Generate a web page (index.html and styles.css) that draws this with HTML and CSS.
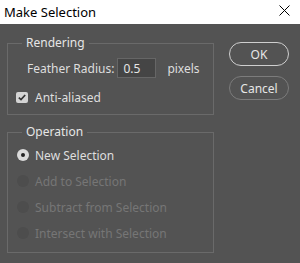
FILE: index.html
```html
<!DOCTYPE html>
<html lang="en">
<head>
    <meta charset="UTF-8">
    <meta name="viewport" content="width=device-width, initial-scale=1.0">
    <title>Make Selection</title>
    <link rel="stylesheet" href="styles.css">
</head>
<body>
    <header class="titlebar">
        <span class="title">Make Selection</span>
        <svg class="close" width="11" height="11" viewBox="0 0 11 11">
            <path d="M0.5 0.5 L10.5 10.5 M10.5 0.5 L0.5 10.5" stroke="#000" stroke-width="1" fill="none"/>
        </svg>
    </header>
    <main class="dialog">
        <div class="groups">
            <fieldset class="group group-render">
                <legend>Rendering</legend>
                <div class="row feather">
                    <label for="radius">Feather Radius:</label>
                    <input type="text" id="radius" value="0.5">
                    <span class="unit">pixels</span>
                </div>
                <div class="row check">
                    <span class="checkbox">
                        <svg width="8" height="7" viewBox="0 0 8 7">
                            <path d="M0.8 3.6 L3 5.6 L7.2 1" stroke="#333" stroke-width="1.7" fill="none"/>
                        </svg>
                    </span>
                    <span>Anti-aliased</span>
                </div>
            </fieldset>
            <fieldset class="group group-op">
                <legend>Operation</legend>
                <div class="row radio-row">
                    <span class="radio on"></span>
                    <span>New Selection</span>
                </div>
                <div class="row radio-row disabled">
                    <span class="radio"></span>
                    <span>Add to Selection</span>
                </div>
                <div class="row radio-row disabled">
                    <span class="radio"></span>
                    <span>Subtract from Selection</span>
                </div>
                <div class="row radio-row disabled">
                    <span class="radio"></span>
                    <span>Intersect with Selection</span>
                </div>
            </fieldset>
        </div>
        <div class="buttons">
            <button class="btn btn-primary">OK</button>
            <button class="btn">Cancel</button>
        </div>
    </main>
</body>
</html>
```

FILE: styles.css
```css
body {
    margin: 0;
    width: 300px;
    height: 263px;
    background-color: #535353;
    font-family: "Noto Sans", "Open Sans", sans-serif;
    font-size: 12px;
    color: #dedede;
    overflow: hidden;
}
.titlebar {
    height: 24px;
    background-color: #fff;
    display: flex;
    align-items: center;
    justify-content: space-between;
    padding: 0 10px 0 4px;
}
.title {
    color: #000;
    font-size: 13px;
    font-family: "Noto Sans", sans-serif;
}
.close {
    margin-top: -3px;
}
.dialog {
    display: flex;
    align-items: flex-start;
    padding-left: 7px;
}
.groups {
    display: flex;
    flex-direction: column;
    width: 207px;
}
.group {
    margin: 0;
    padding: 0;
    border: 1px solid #6a6a6a;
    min-width: 0;
}
.group legend {
    margin-left: 14px;
    padding: 0 4px;
    line-height: 16px;
    color: #e6e6e6;
}
.group-render {
    margin-top: 11px;
    padding-bottom: 9px;
}
.group-op {
    margin-top: 9px;
    padding-top: 2px;
    padding-bottom: 6px;
}
.row {
    display: flex;
    align-items: center;
}
.feather {
    height: 20px;
    margin-top: 7px;
    padding-left: 19px;
}
.feather input {
    width: 32px;
    height: 18px;
    margin: 0 0 0 3px;
    padding: 0 0 0 5px;
    border: 1px solid #666;
    background-color: #454545;
    color: #e6e6e6;
    font-family: inherit;
    font-size: 12px;
}
.unit {
    margin-left: 11px;
}
.check {
    height: 16px;
    margin-top: 11px;
    padding-left: 8px;
    gap: 7px;
}
.checkbox {
    width: 12px;
    height: 11px;
    border-radius: 2px;
    background-color: #d4d4d4;
    display: flex;
    align-items: center;
    justify-content: center;
}
.radio-row {
    height: 26px;
    padding-left: 9px;
    gap: 6px;
}
.radio {
    width: 12px;
    height: 12px;
    border-radius: 50%;
    background-color: #4d4d4d;
    box-sizing: border-box;
    position: relative;
}
.radio.on {
    background-color: #dadada;
}
.radio.on::after {
    content: "";
    position: absolute;
    left: 4px;
    top: 4px;
    width: 4px;
    height: 4px;
    border-radius: 50%;
    background-color: #222;
}
.disabled {
    color: #767676;
}
.buttons {
    display: flex;
    flex-direction: column;
    gap: 10px;
    margin-left: 15px;
    margin-top: 18px;
}
.btn {
    width: 60px;
    height: 24px;
    border-radius: 12px;
    border: 1px solid #7c7c7c;
    background-color: #535353;
    color: #e6e6e6;
    font-family: inherit;
    font-size: 12px;
    padding: 0;
}
.btn-primary {
    border: 1.5px solid #cfcfcf;
}
```
